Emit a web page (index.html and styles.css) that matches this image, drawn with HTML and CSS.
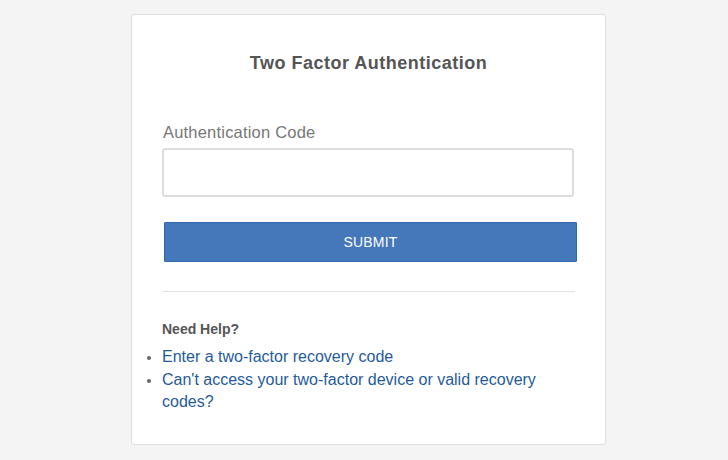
FILE: index.html
```html
<!DOCTYPE html>
<html>
<head>
<meta charset="utf-8">
<link rel="stylesheet" href="styles.css">
</head>
<body>
<div class="card">
  <h1 class="title">Two Factor Authentication</h1>
  <form class="form">
    <label class="label" for="code">Authentication Code</label>
    <input class="input" id="code" type="text">
    <button class="btn" type="button">SUBMIT</button>
  </form>
  <hr class="rule">
  <div class="help">
    <h2 class="help-title">Need Help?</h2>
    <ul class="help-list">
      <li><a href="#">Enter a two-factor recovery code</a></li>
      <li><a href="#">Can't access your two-factor device or valid recovery codes?</a></li>
    </ul>
  </div>
</div>
</body>
</html>
```
FILE: styles.css
```css
html, body {
  margin: 0;
  padding: 0;
  background: #f3f4f3;
  font-family: "Liberation Sans", Arial, sans-serif;
}
body {
  padding-top: 14px;
}
.card {
  box-sizing: border-box;
  width: 475px;
  height: 431px;
  margin: 0 0 0 131px;
  background: #fff;
  border: 1px solid #dedede;
  border-radius: 3px;
  padding: 36px 30px 0 30px;
}
.title {
  margin: 0;
  text-align: center;
  font-size: 18px;
  font-weight: bold;
  color: #555;
  letter-spacing: 0.5px;
  line-height: 24px;
}
.form {
  display: flex;
  flex-direction: column;
  margin-top: 47px;
}
.label {
  font-size: 16.5px;
  color: #777;
  line-height: 20px;
  letter-spacing: 0.2px;
  margin-left: 1px;
}
.input {
  box-sizing: border-box;
  margin: 6px 0 0 0;
  height: 49px;
  width: 412px;
  border: 2px solid #ddd;
  border-radius: 3px;
  background: #fff;
  outline: none;
}
.btn {
  box-sizing: border-box;
  margin: 25px 0 0 2px;
  height: 40px;
  width: 413px;
  border: 1px solid #2f66ae;
  border-radius: 1px;
  background: #4577bb;
  color: #fff;
  font-family: "Liberation Sans", Arial, sans-serif;
  font-size: 14px;
  letter-spacing: 0.2px;
}
.rule {
  margin: 29px 0 0 0;
  border: 0;
  border-top: 1px solid #e2e2e2;
  width: 413px;
}
.help {
  padding-top: 28px;
}
.help-title {
  margin: 0;
  font-size: 14px;
  font-weight: bold;
  color: #555;
  line-height: 18px;
}
.help-list {
  margin: 8px 0 0 0;
  padding-left: 0;
  list-style: disc outside none;
  color: #666;
}
.help-list li {
  font-size: 16px;
  line-height: 22.5px;
}
.help-list li::marker {
  font-size: 13px;
}
.help-list a {
  color: #1f5b9b;
  text-decoration: none;
}
```
